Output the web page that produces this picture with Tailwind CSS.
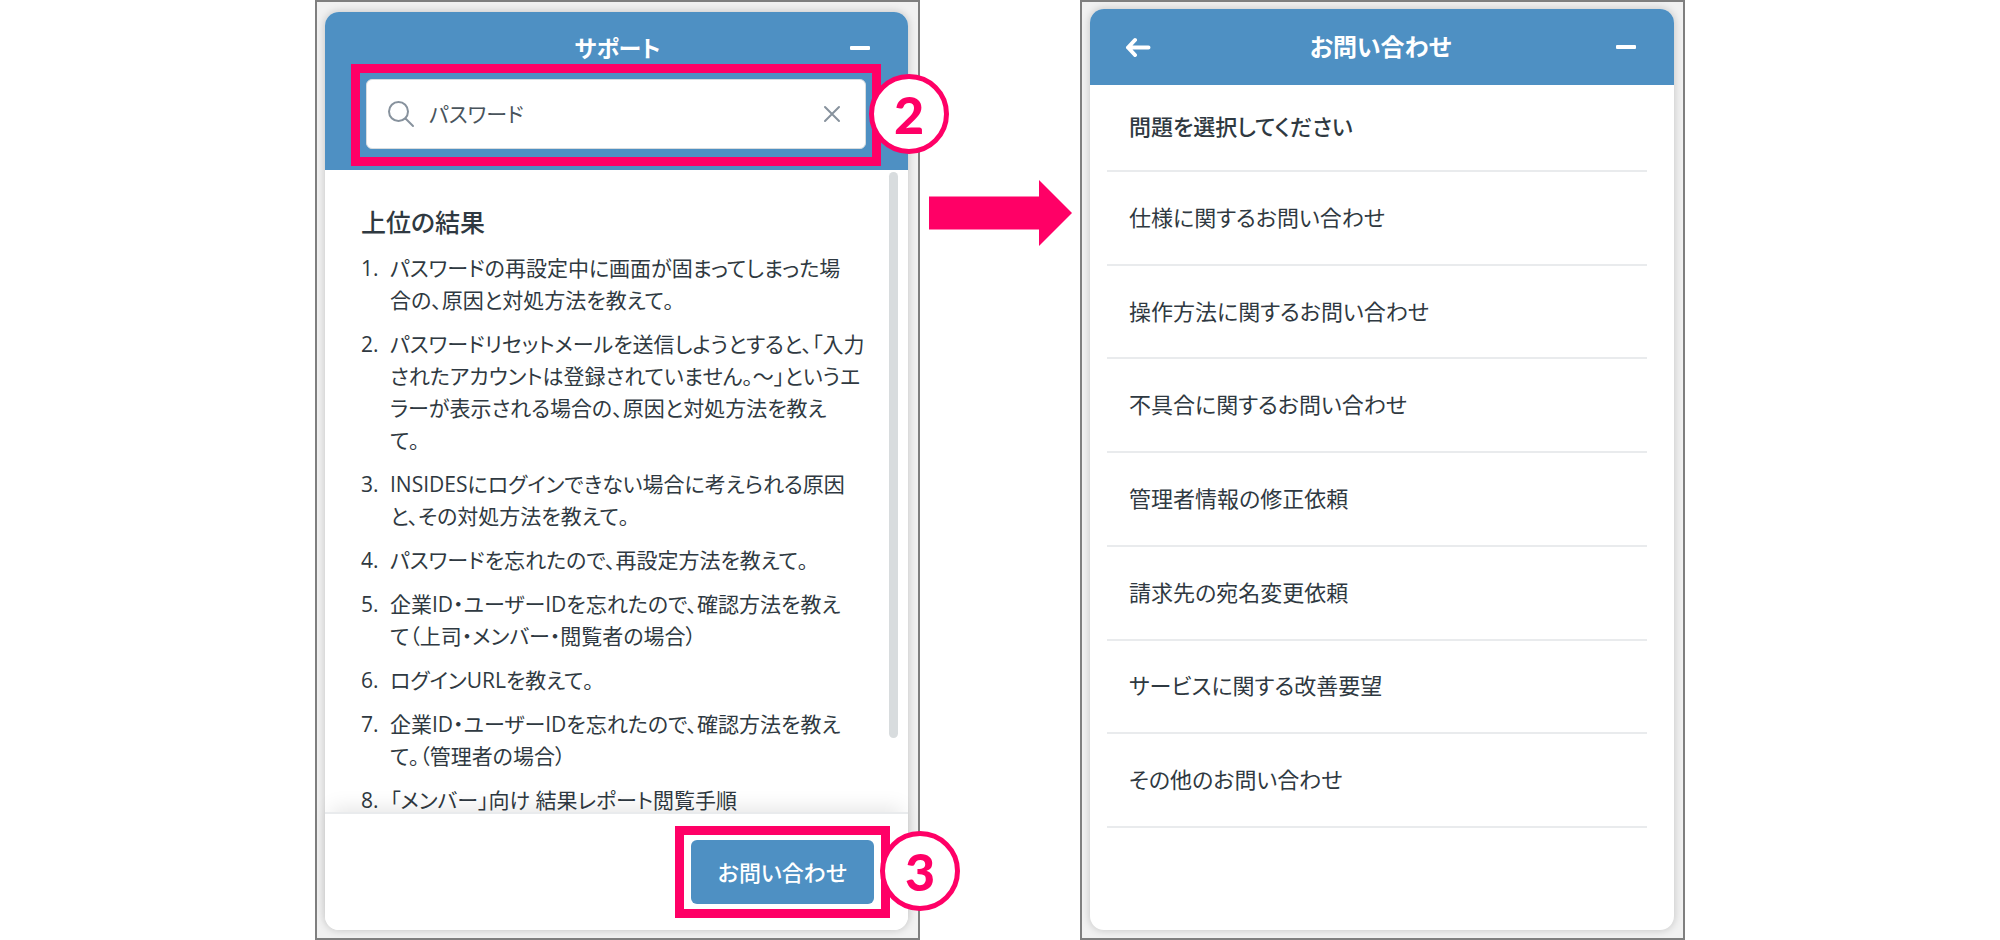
<!DOCTYPE html>
<html lang="ja">
<head>
    <meta charset="UTF-8">
    <meta name="viewport" content="width=device-width, initial-scale=1.0">
    <title>サポート - お問い合わせ</title>
    <script src="https://cdn.jsdelivr.net/npm/@tailwindcss/browser@4"></script>
</head>
<body class="bg-white text-[#2f3941] font-['Open_Sans','Noto_Sans_CJK_JP',sans-serif] [font-feature-settings:'palt']">
    <main class="grid grid-cols-[1fr_160px_1fr] grid-rows-1 h-screen min-h-[720px] px-[315px]">

        <!-- サポート検索 -->
        <section class="flex min-h-0 border-2 border-[#7f7f7f] bg-[#f1f1f1] pt-[10px] pr-[10px] pb-2 pl-2">
            <div class="flex flex-col flex-1 min-w-0 rounded-[14px] bg-white shadow-[0_0_8px_rgba(0,0,0,0.2)]">
                <header class="rounded-t-[14px] bg-[#4e90c3] pl-10 pr-[38px] pt-5 pb-[21px]">
                    <div class="grid grid-cols-[1fr_auto_1fr] items-center h-8 mb-[15px] text-white">
                        <h1 class="col-start-2 text-[23px] leading-8 font-bold">サポート</h1>
                        <button type="button" aria-label="最小化" class="justify-self-end">
                            <svg class="block w-5 h-5" viewBox="0 0 20 20"><rect y="8" width="20" height="4" rx="1" fill="currentColor"/></svg>
                        </button>
                    </div>
                    <div class="relative ml-[1px] mr-1">
                        <div class="flex items-center h-[70px] rounded-md border border-[#d8dcde] bg-white px-5 text-[#87929d]">
                            <svg class="w-7 h-7 shrink-0" viewBox="0 0 28 28" fill="none" stroke="currentColor" stroke-width="2" stroke-linecap="round">
                                <circle cx="11.5" cy="11.5" r="9.5"/>
                                <path d="M18.5 18.5 26 26"/>
                            </svg>
                            <input type="text" value="パスワード" aria-label="検索" class="flex-1 min-w-0 ml-[14px] text-[21px] leading-8 text-[#49545c] outline-none">
                            <button type="button" aria-label="クリア" class="mr-1">
                                <svg class="block w-[18px] h-[18px]" viewBox="0 0 18 18" fill="none" stroke="currentColor" stroke-width="2" stroke-linecap="round"><path d="M2 2 16 16M16 2 2 16"/></svg>
                            </button>
                        </div>
                        <div class="absolute -inset-x-[15px] -top-[15px] -bottom-[17px] border-[9px] border-[#ff0066] pointer-events-none"></div>
                        <span class="absolute -top-[5px] -right-[83px] z-10 flex items-center justify-center size-20 rounded-full border-[5px] border-[#ff0066] bg-white font-['Lato',sans-serif] text-[52px] leading-none font-black text-[#ff0066]">2</span>
                    </div>
                </header>

                <div class="relative flex-1 min-h-0 overflow-hidden pt-[34px] pl-9">
                    <h2 class="text-[25px] leading-9 font-medium">上位の結果</h2>
                    <ol class="mt-3 space-y-3 text-[21px] leading-8 whitespace-nowrap">
                        <li class="flex"><span class="w-[29px]">1.</span><a href="#">パスワードの再設定中に画面が固まってしまった場<br>合の、原因と対処方法を教えて。</a></li>
                        <li class="flex"><span class="w-[29px]">2.</span><a href="#">パスワードリセットメールを送信しようとすると、「入力<br>されたアカウントは登録されていません。～」というエ<br>ラーが表示される場合の、原因と対処方法を教え<br>て。</a></li>
                        <li class="flex"><span class="w-[29px]">3.</span><a href="#">INSIDESにログインできない場合に考えられる原因<br>と、その対処方法を教えて。</a></li>
                        <li class="flex"><span class="w-[29px]">4.</span><a href="#">パスワードを忘れたので、再設定方法を教えて。</a></li>
                        <li class="flex"><span class="w-[29px]">5.</span><a href="#">企業ID・ユーザーIDを忘れたので、確認方法を教え<br>て（上司・メンバー・閲覧者の場合）</a></li>
                        <li class="flex"><span class="w-[29px]">6.</span><a href="#">ログインURLを教えて。</a></li>
                        <li class="flex"><span class="w-[29px]">7.</span><a href="#">企業ID・ユーザーIDを忘れたので、確認方法を教え<br>て。（管理者の場合）</a></li>
                        <li class="flex"><span class="w-[29px]">8.</span><a href="#">「メンバー」向け 結果レポート閲覧手順</a></li>
                    </ol>
                    <!-- スクロールバー -->
                    <div class="absolute top-[2px] right-[10px] w-[9px] h-[566px] rounded-full bg-[#d8dcde]"></div>
                </div>

                <footer class="relative flex justify-end h-[118px] rounded-b-[14px] border-t-2 border-[#e9ebed] bg-white pt-[26px] pr-[34px] shadow-[0_-10px_20px_-6px_rgba(0,0,0,0.1)]">
                    <div class="relative h-16">
                        <button type="button" class="h-16 rounded-md bg-[#4e90c3] px-[27px] text-[22px] leading-8 font-medium text-white">お問い合わせ</button>
                        <div class="absolute -inset-x-4 -inset-y-[14px] border-[9px] border-[#ff0066] pointer-events-none"></div>
                        <span class="absolute -top-[9px] -right-[86px] z-10 flex items-center justify-center size-20 rounded-full border-[5px] border-[#ff0066] bg-white font-['Lato',sans-serif] text-[52px] leading-none font-black text-[#ff0066]">3</span>
                    </div>
                </footer>
            </div>
        </section>

        <!-- 矢印 -->
        <div class="flex justify-center pt-[180px]">
            <svg class="w-[143px] h-[66px]" viewBox="0 0 143 66" fill="#ff0066"><path d="M0 16.5H110V0L143 33 110 66V49.5H0Z"/></svg>
        </div>

        <!-- お問い合わせ -->
        <section class="flex min-h-0 border-2 border-[#7f7f7f] bg-[#f1f1f1] pt-[7px] pr-[9px] pb-2 pl-2">
            <div class="flex flex-col flex-1 min-w-0 rounded-[14px] bg-white shadow-[0_0_8px_rgba(0,0,0,0.2)]">
                <header class="grid grid-cols-[1fr_auto_1fr] items-center h-[76px] rounded-t-[14px] bg-[#4e90c3] pl-[35px] pr-[38px] text-white">
                    <button type="button" aria-label="戻る" class="justify-self-start">
                        <svg class="block w-[26px] h-5" viewBox="0 0 26 20" fill="none" stroke="currentColor" stroke-width="4" stroke-linecap="round" stroke-linejoin="round"><path d="M10 3 3 10.5 10 18M3 10.5H23.5"/></svg>
                    </button>
                    <h1 class="text-[24px] leading-8 font-bold">お問い合わせ</h1>
                    <button type="button" aria-label="最小化" class="justify-self-end">
                        <svg class="block w-5 h-5" viewBox="0 0 20 20"><rect y="8" width="20" height="4" rx="1" fill="currentColor"/></svg>
                    </button>
                </header>
                <div class="flex flex-col flex-1 ml-[17px] mr-[27px] mb-[102px] text-[22px] leading-8">
                    <h2 class="h-[87px] border-b-2 border-[#e9ebed] pt-[25px] pl-[22px] font-medium">問題を選択してください</h2>
                    <ul class="flex flex-col flex-1">
                        <li class="flex flex-1 border-b-2 border-[#e9ebed]"><a href="#" class="flex flex-1 items-center pl-[22px] pb-[2px]">仕様に関するお問い合わせ</a></li>
                        <li class="flex flex-1 border-b-2 border-[#e9ebed]"><a href="#" class="flex flex-1 items-center pl-[22px] pb-[2px]">操作方法に関するお問い合わせ</a></li>
                        <li class="flex flex-1 border-b-2 border-[#e9ebed]"><a href="#" class="flex flex-1 items-center pl-[22px] pb-[2px]">不具合に関するお問い合わせ</a></li>
                        <li class="flex flex-1 border-b-2 border-[#e9ebed]"><a href="#" class="flex flex-1 items-center pl-[22px] pb-[2px]">管理者情報の修正依頼</a></li>
                        <li class="flex flex-1 border-b-2 border-[#e9ebed]"><a href="#" class="flex flex-1 items-center pl-[22px] pb-[2px]">請求先の宛名変更依頼</a></li>
                        <li class="flex flex-1 border-b-2 border-[#e9ebed]"><a href="#" class="flex flex-1 items-center pl-[22px] pb-[2px]">サービスに関する改善要望</a></li>
                        <li class="flex flex-1 border-b-2 border-[#e9ebed]"><a href="#" class="flex flex-1 items-center pl-[22px] pb-[2px]">その他のお問い合わせ</a></li>
                    </ul>
                </div>
            </div>
        </section>
    </main>
</body>
</html>
